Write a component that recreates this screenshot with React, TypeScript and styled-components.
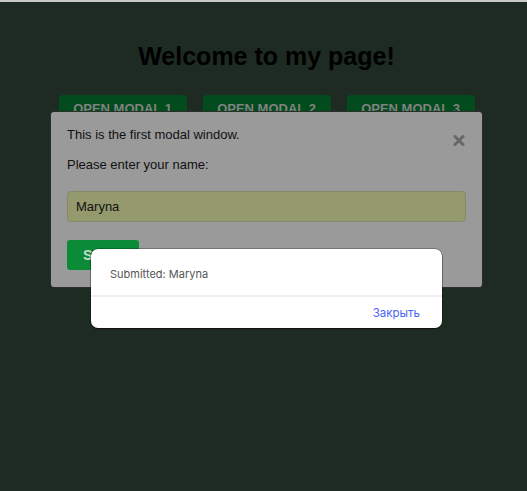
import React from "react";
import styled, { createGlobalStyle } from "styled-components";

const Global = createGlobalStyle`
  html, body { margin: 0; padding: 0; }
  body {
    background: #1e2b22;
    font-family: "Liberation Sans", Arial, sans-serif;
    border-top: 2px solid #c9c9c9;
    min-height: 489px;
    overflow: hidden;
  }
`;

const Page = styled.div`
  display: flex;
  flex-direction: column;
  align-items: center;
  padding-left: 6px;
`;

const Title = styled.h1`
  margin: 39px 0 0;
  font-size: 25px;
  font-weight: bold;
  color: #000;
  line-height: 30px;
`;

const ButtonRow = styled.div`
  display: flex;
  gap: 16px;
  margin-top: 24px;
`;

const OpenButton = styled.button`
  width: 128px;
  height: 34px;
  border: none;
  border-radius: 4px;
  background: #024b1c;
  color: #7f827f;
  font-family: "Liberation Sans", Arial, sans-serif;
  font-weight: bold;
  font-size: 13px;
  text-transform: uppercase;
  padding: 6px 0 0;
  display: flex;
  justify-content: center;
  align-items: flex-start;
`;

const Layer = styled.div<{ $top: number }>`
  position: absolute;
  top: ${(p) => p.$top}px;
  left: 0;
  right: 0;
  display: flex;
  justify-content: center;
  padding-left: 6px;
`;

const Modal = styled.div`
  box-sizing: border-box;
  width: 431px;
  height: 175px;
  background: #9a9a9a;
  border-radius: 3px;
  box-shadow: 0 0 0 1px #2a2f2a;
  padding: 14px 16px 0 16px;
  position: relative;
  color: #111;
  font-size: 13px;
`;

const CloseIcon = styled.svg`
  position: absolute;
  top: 23px;
  right: 17px;
  width: 12px;
  height: 11px;
`;

const Line = styled.p<{ $mt: number }>`
  margin: ${(p) => p.$mt}px 0 0;
  line-height: 18px;
`;

const NameInput = styled.div`
  box-sizing: border-box;
  margin-top: 17px;
  width: 399px;
  height: 31px;
  background: #949a6e;
  border: 1px solid #858a68;
  border-radius: 4px;
  padding: 0 8px;
  display: flex;
  align-items: center;
  font-size: 13px;
  color: #111;
`;

const SubmitButton = styled.div`
  margin-top: 18px;
  width: 72px;
  height: 30px;
  border-radius: 3px;
  background: #0b8a38;
  color: #c9dcc9;
  font-weight: bold;
  font-size: 14px;
  display: flex;
  align-items: center;
  padding-left: 16px;
  box-sizing: border-box;
`;

const Dialog = styled.div`
  width: 351px;
  height: 79px;
  background: #fff;
  border-radius: 7px;
  box-shadow: 0 1px 1px 0 #111, 0 0 0 0.5px rgba(0, 0, 0, 0.5);
  display: flex;
  flex-direction: column;
  font-family: Inter, "Noto Sans", sans-serif;
  overflow: hidden;
`;

const DialogBody = styled.div`
  height: 48px;
  box-sizing: border-box;
  padding: 18px 19px 0;
  font-size: 11px;
  color: #555;
  border-bottom: 2px solid #eeeeee;
`;

const DialogFooter = styled.div`
  flex: 1;
  display: flex;
  justify-content: flex-end;
  align-items: center;
  padding: 0 22px 0 0;
  font-size: 11.5px;
  color: #4b63f5;
`;

export default function App() {
  return (
    <>
      <Global />
      <Page>
        <Title>Welcome to my page!</Title>
        <ButtonRow>
          <OpenButton>Open modal 1</OpenButton>
          <OpenButton>Open modal 2</OpenButton>
          <OpenButton>Open modal 3</OpenButton>
        </ButtonRow>
      </Page>
      <Layer $top={112}>
        <Modal>
          <CloseIcon viewBox="0 0 12 11">
            <path d="M2 1.5 L10 9.5 M10 1.5 L2 9.5" stroke="#686868" strokeWidth="3" strokeLinecap="round" />
          </CloseIcon>
          <Line $mt={0}>This is the first modal window.</Line>
          <Line $mt={12}>Please enter your name:</Line>
          <NameInput>Maryna</NameInput>
          <SubmitButton>Submit</SubmitButton>
        </Modal>
      </Layer>
      <Layer $top={249}>
        <Dialog>
          <DialogBody>Submitted: Maryna</DialogBody>
          <DialogFooter>Закрыть</DialogFooter>
        </Dialog>
      </Layer>
    </>
  );
}
